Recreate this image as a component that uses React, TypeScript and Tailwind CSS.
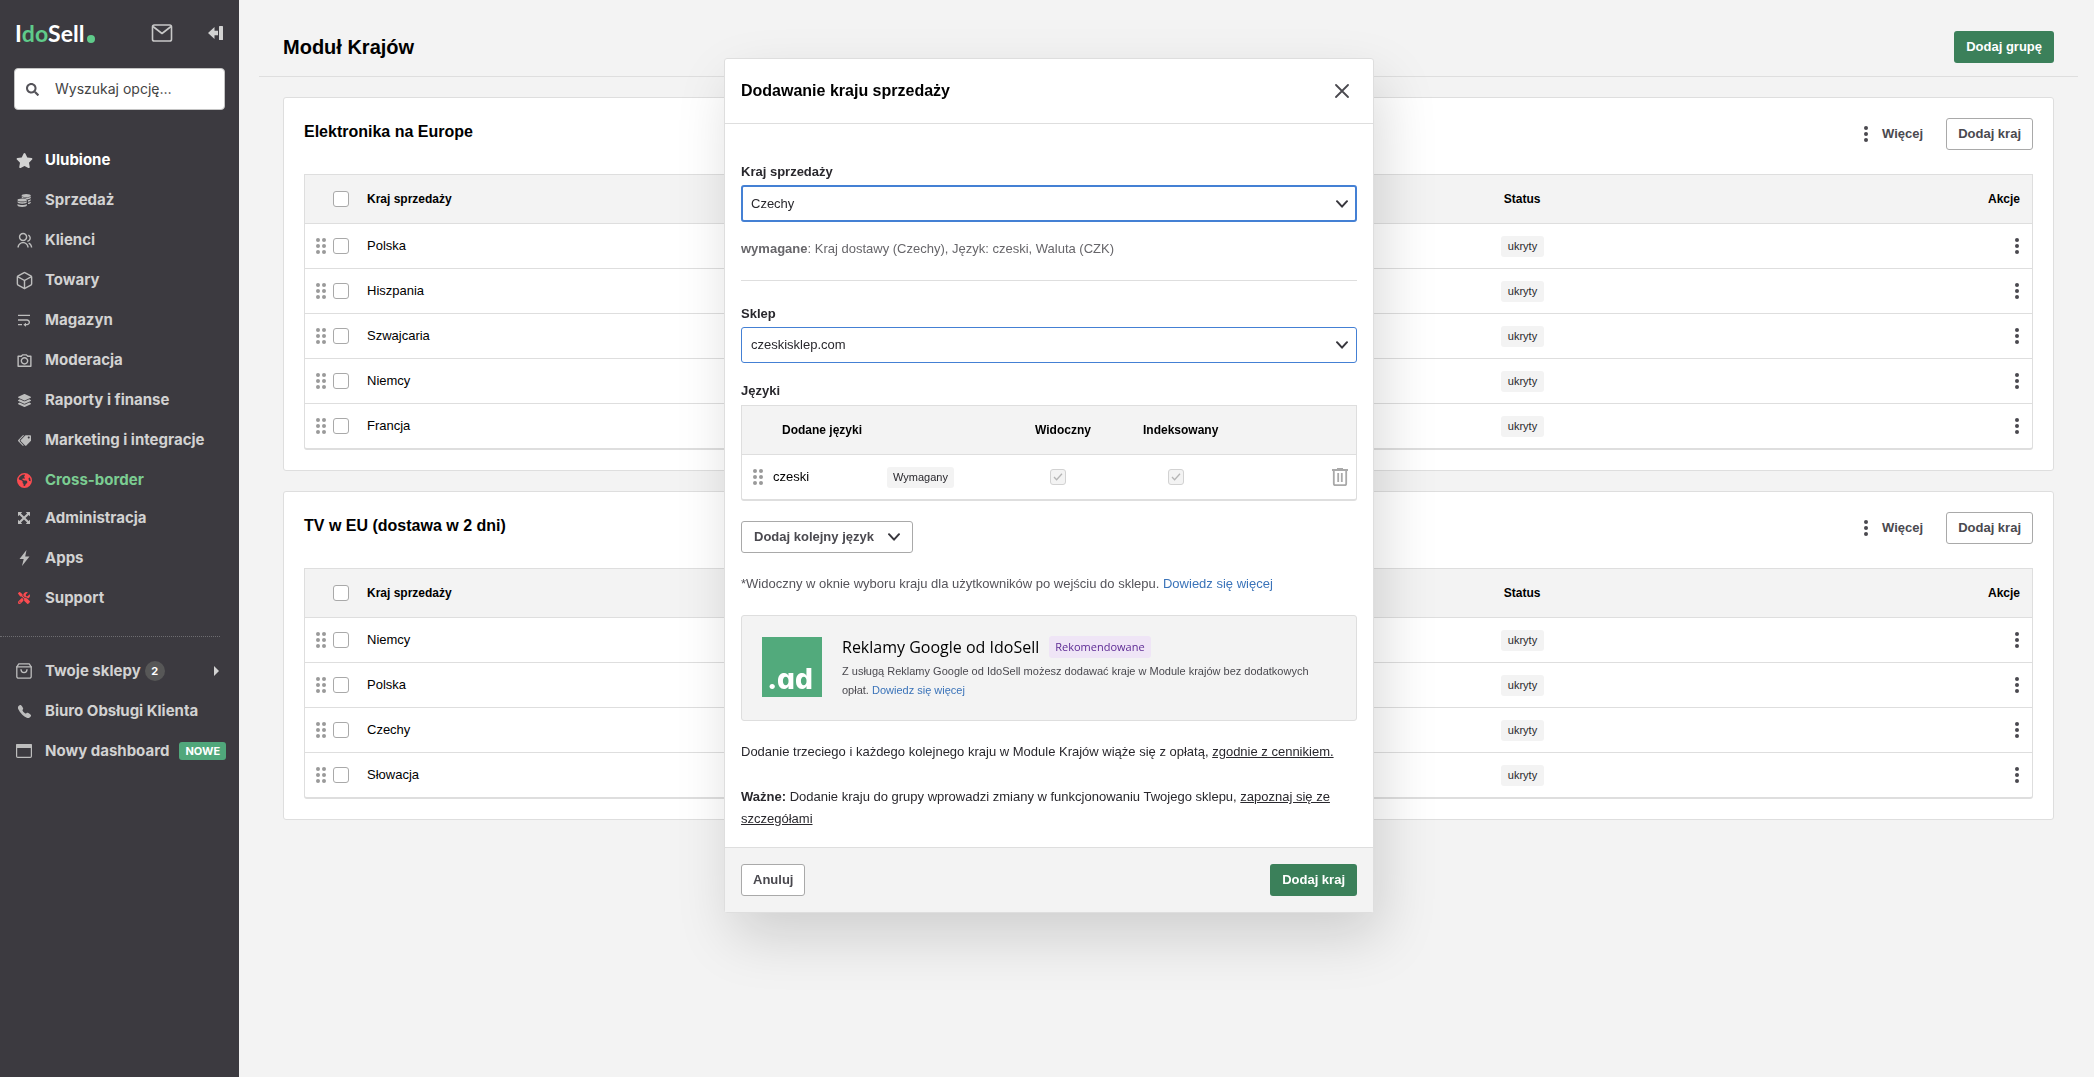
import type { ReactNode } from "react";
import { FaLayerGroup, FaSearch, FaStar, FaTags } from "react-icons/fa";
import { FaEarthAmericas, FaScrewdriverWrench } from "react-icons/fa6";
import { IoCall } from "react-icons/io5";
import { LuBox } from "react-icons/lu";
import { RiCameraLine, RiGroupLine, RiTextWrap } from "react-icons/ri";

function MailIcon() {
  return (
    <svg width="22" height="18" viewBox="0 0 22 18" fill="none" stroke="#c8c8c8" strokeWidth="1.6" strokeLinejoin="round">
      <rect x="1.5" y="1" width="19" height="16" rx="1.8" />
      <path d="M2 2.5 11 9.5 20 2.5" />
    </svg>
  );
}

function CollapseIcon() {
  return (
    <svg width="16" height="14" viewBox="0 0 16 14" fill="#d2d2d2">
      <path d="M0 7 6.5 1v3.8H10v4.4H6.5V13Z" />
      <rect x="11" y="0" width="4" height="14" rx="0.5" />
    </svg>
  );
}

function CoinsIcon() {
  return (
    <svg width="14" height="13" viewBox="0 0 14 13" fill="currentColor">
      <ellipse cx="9.2" cy="1.6" rx="4.6" ry="1.6" />
      <path d="M4.6 2.6c.8.8 2.6 1.2 4.6 1.2s3.8-.4 4.6-1.2v1c0 .9-1.4 1.6-3.4 1.8-.7-.7-2.5-1.1-4.6-1.1-.8-.3-1.2-.7-1.2-1.2Z" />
      <path d="M13.8 5.2v.9c0 .8-1.1 1.4-2.8 1.7V6.2c1.3-.2 2.3-.5 2.8-1ZM13.8 7.7v.7c0 .8-1.1 1.4-2.8 1.7V8.7c1.3-.2 2.3-.5 2.8-1Z" />
      <ellipse cx="5.2" cy="6" rx="4.7" ry="1.5" />
      <path d="M.5 7.3c.9.6 2.7 1 4.7 1s3.800-.4 4.700-1v.8c0 .9-2.100 1.600-4.700 1.600S.5 9 .5 8.100ZM.5 9.900c.9.600 2.700 1 4.700 1s3.800-.4 4.700-1v1.300c0 1-2.100 1.700-4.700 1.700s-4.700-.7-4.700-1.700Z" />
    </svg>
  );
}

function BoltIcon() {
  return (
    <svg width="11" height="16" viewBox="0 0 11 16" fill="currentColor">
      <path d="M7.5 0 .5 9h4.200L3 16l7.500-9.500H6.200Z" />
    </svg>
  );
}

function ArrowsOutIcon() {
  return (
    <svg width="12" height="12" viewBox="0 0 12 12" fill="currentColor">
      <path d="M0 0h4.2L2.9 1.4 6 4.5 9.1 1.4 7.8 0H12v4.2L10.6 2.9 7.5 6l3.1 3.1L12 7.8V12H7.8l1.3-1.4L6 7.5l-3.1 3.1L4.2 12H0V7.8l1.4 1.3L4.5 6 1.4 2.9 0 4.2Z" />
    </svg>
  );
}

function BagIcon() {
  return (
    <svg width="16" height="16" viewBox="0 0 16 16" fill="none" stroke="currentColor" strokeWidth="1.3" strokeLinejoin="round" strokeLinecap="round">
      <path d="M.8 3.8 2.8.8h10.4l2 3v9.6a1.8 1.8 0 0 1-1.8 1.8H2.6a1.8 1.8 0 0 1-1.8-1.8Z" />
      <path d="M.8 3.9h14.4M5 6.6a3 3 0 0 0 6 0" />
    </svg>
  );
}

function WindowIcon() {
  return (
    <svg width="16" height="14" viewBox="0 0 16 14">
      <rect x=".6" y=".6" width="14.8" height="12.8" rx="1.2" fill="none" stroke="currentColor" strokeWidth="1.2" />
      <path d="M0 1.2C0 .5.5 0 1.2 0h13.6c.7 0 1.2.5 1.2 1.2V4H0Z" fill="currentColor" />
    </svg>
  );
}

function DragDots() {
  return (
    <svg width="10" height="16" viewBox="0 0 10 16" fill="#9a9a9a" aria-hidden="true">
      {[2, 8, 14].map((y) => (
        <g key={y}>
          <circle cx="2" cy={y} r="2" />
          <circle cx="8" cy={y} r="2" />
        </g>
      ))}
    </svg>
  );
}

function MenuDots() {
  return (
    <svg width="4" height="16" viewBox="0 0 4 16" fill="#4a494f" aria-hidden="true">
      <circle cx="2" cy="2" r="2" />
      <circle cx="2" cy="8" r="2" />
      <circle cx="2" cy="14" r="2" />
    </svg>
  );
}

function Chevron() {
  return (
    <svg width="12" height="8" viewBox="0 0 12 8" fill="none" stroke="#38373d" strokeWidth="2" strokeLinecap="round" strokeLinejoin="round" aria-hidden="true">
      <path d="M1 1.2 6 6.7 11 1.2" />
    </svg>
  );
}

function TrashIcon() {
  return (
    <svg width="16" height="18" viewBox="0 0 16 18" fill="none" stroke="#a9a9a9" strokeWidth="1.8" aria-hidden="true">
      <path d="M0 2h16M5 .9h6M1.8 2v13.4c0 1 .7 1.7 1.6 1.7h9.2c.9 0 1.6-.7 1.6-1.7V2M6.2 5v9M9.8 5v9" />
    </svg>
  );
}

function NavItem({ icon, label, tone = "normal", children }: { icon: ReactNode; label: string; tone?: "normal" | "bright" | "green"; children?: ReactNode }) {
  const color = tone === "bright" ? "text-white" : tone === "green" ? "text-[#7bcd92]" : "text-[#d2d2d2]";
  return (
    <li>
      <a href="#" className="flex h-10 items-center pr-5 pl-4">
        <span className="flex w-[29px] shrink-0 items-center text-[#bdbdbd]">
          <span className="flex w-4 justify-center [&>svg]:shrink-0">{icon}</span>
        </span>
        <span className={`text-[15px] font-bold whitespace-nowrap ${color}`}>{label}</span>
        {children}
      </a>
    </li>
  );
}

function Sidebar() {
  return (
    <aside className="w-[239px] shrink-0 bg-[#3c3a40] font-['Inter',sans-serif]">
      <div className="flex items-center pt-[17px] pr-[15px] pl-[15px]">
        <a href="#" className="flex items-center font-['Lato',sans-serif] text-[23px] leading-8 font-bold text-white">
          I<span className="text-[#5fcb8a]">do</span>Sell
          <span className="mt-3 ml-[3px] size-2 rounded-full bg-[#5fcb8a]" />
        </a>
        <button type="button" aria-label="Wiadomości" className="ml-auto">
          <MailIcon />
        </button>
        <button type="button" aria-label="Zwiń menu" className="ml-[35px]">
          <CollapseIcon />
        </button>
      </div>
      <label className="mx-3.5 mt-[19px] flex h-[42px] items-center rounded border border-[#c4c4c4] bg-white pl-[11px]">
        <FaSearch className="size-[13px] shrink-0 text-[#55545a]" />
        <input type="text" aria-label="Szukaj" placeholder="Wyszukaj opcję…" className="ml-4 w-full min-w-0 bg-transparent text-sm text-[#444] outline-none placeholder:text-[#444]" />
      </label>
      <nav className="pt-[30px]">
        <ul>
          <NavItem icon={<FaStar className="size-[17px] text-[#d2d2d2]" />} label="Ulubione" tone="bright" />
          <NavItem icon={<CoinsIcon />} label="Sprzedaż" />
          <NavItem icon={<RiGroupLine className="size-[17px]" />} label="Klienci" />
          <NavItem icon={<LuBox className="size-[19px] stroke-[1.8]" />} label="Towary" />
          <NavItem icon={<RiTextWrap className="size-4" />} label="Magazyn" />
          <NavItem icon={<RiCameraLine className="size-[17px]" />} label="Moderacja" />
          <NavItem icon={<FaLayerGroup className="size-[13px]" />} label="Raporty i finanse" />
          <NavItem icon={<FaTags className="size-[13px] -scale-x-100" />} label="Marketing i integracje" />
          <NavItem icon={<FaEarthAmericas className="size-[15px] text-[#fb4b50]" />} label="Cross-border" tone="green" />
        </ul>
        <ul className="-mt-0.5">
          <NavItem icon={<ArrowsOutIcon />} label="Administracja" />
          <NavItem icon={<BoltIcon />} label="Apps" />
          <NavItem icon={<FaScrewdriverWrench className="size-3 text-[#fb4b50]" />} label="Support" />
        </ul>
        <hr className="mt-[18px] mr-[19px] border-t border-dotted border-[#6d6c70]" />
        <ul className="mt-3.5">
          <NavItem icon={<BagIcon />} label="Twoje sklepy">
            <span className="ml-1 flex size-5 items-center justify-center rounded-full bg-[#575757] text-[11px] font-bold text-white">2</span>
            <svg width="5" height="10" viewBox="0 0 5 10" fill="#d2d2d2" className="ml-auto">
              <path d="M0 0 5 5 0 10Z" />
            </svg>
          </NavItem>
          <NavItem icon={<IoCall className="size-[15px]" />} label="Biuro Obsługi Klienta" />
          <NavItem icon={<WindowIcon />} label="Nowy dashboard">
            <span className="ml-2.5 rounded-[3px] bg-[#50a77b] px-1.5 text-[11px] leading-[18px] font-bold text-white">NOWE</span>
          </NavItem>
        </ul>
      </nav>
    </aside>
  );
}

const checkboxClass = "block size-4 appearance-none rounded-[3px] border border-[#a9a9a9] bg-white";
const outlineButton = "flex h-8 items-center rounded-[3px] border border-[#a9a9a9] bg-white text-[13px] font-bold text-[#4a494f]";
const greenButton = "h-8 rounded-[3px] bg-[#3b805a] px-3 text-[13px] font-bold text-white";

function CountryGroup({ title, countries }: { title: string; countries: string[] }) {
  return (
    <section className="rounded-[3px] border border-[#dedede] bg-white p-5">
      <div className="flex items-start">
        <h2 className="text-base leading-7 font-bold">{title}</h2>
        <button type="button" className="ml-auto flex h-8 items-center gap-3.5 text-[13px] font-bold text-[#4a494f]">
          <MenuDots />
          Więcej
        </button>
        <button type="button" className={`${outlineButton} ml-[23px] px-[11px]`}>
          Dodaj kraj
        </button>
      </div>
      <table className="mt-6 w-full table-fixed border-separate border-spacing-0 rounded-b-[3px] border-x border-t border-b-2 border-[#dedede] text-left text-[13px]">
        <thead className="bg-[#f3f3f3] text-xs">
          <tr>
            <th className="h-[49px] w-[50px] border-b border-[#dedede]">
              <input type="checkbox" aria-label="Zaznacz wszystkie" className={`${checkboxClass} ml-7`} />
            </th>
            <th className="w-[66%] border-b border-[#dedede] pl-3">Kraj sprzedaży</th>
            <th className="border-b border-[#dedede] pl-[9px]">Status</th>
            <th className="border-b border-[#dedede] pr-3 text-right">Akcje</th>
          </tr>
        </thead>
        <tbody>
          {countries.map((c, i) => {
            const line = i < countries.length - 1 ? "h-[45px] border-b border-[#dedede]" : "h-11";
            return (
              <tr key={c}>
                <td className={line}>
                  <div className="flex items-center gap-[7px] pl-[11px]">
                    <DragDots />
                    <input type="checkbox" aria-label={c} className={checkboxClass} />
                  </div>
                </td>
                <td className={`pl-3 ${line}`}>{c}</td>
                <td className={`pl-1.5 ${line}`}>
                  <span className="mt-px inline-block rounded-[3px] bg-[#f3f3f3] px-[7px] align-middle text-[11px] leading-[21px] text-[#29282d]">ukryty</span>
                </td>
                <td className={`pr-[13px] ${line}`}>
                  <button type="button" aria-label={`Akcje: ${c}`} className="ml-auto block">
                    <MenuDots />
                  </button>
                </td>
              </tr>
            );
          })}
        </tbody>
      </table>
    </section>
  );
}

function DisabledCheck({ label }: { label: string }) {
  return (
    <span className="relative block size-4">
      <input type="checkbox" checked disabled readOnly aria-label={label} className="block size-4 appearance-none rounded-[3px] border border-[#d2d2d2] bg-[#f3f3f3]" />
      <svg width="10" height="8" viewBox="0 0 10 8" fill="none" stroke="#b5b5b5" strokeWidth="1.3" className="absolute top-1 left-[3px]">
        <path d="M1 4 3.6 6.8 9 .8" />
      </svg>
    </span>
  );
}

function SelectField({ id, label, value, className }: { id: string; label: string; value: string; className: string }) {
  return (
    <div>
      <label htmlFor={id} className="block text-[13px] leading-5 font-bold text-[#29282d]">
        {label}
      </label>
      <div className="relative mt-[3px]">
        <select id={id} defaultValue={value} className={`block w-full appearance-none rounded-[3px] bg-white text-[13px] text-[#29282d] outline-none ${className}`}>
          <option>{value}</option>
        </select>
        <span className="pointer-events-none absolute inset-y-0 right-[9px] flex items-center">
          <Chevron />
        </span>
      </div>
    </div>
  );
}

function Modal() {
  return (
    <div className="fixed inset-0 flex items-start justify-center pt-[58px] pl-1">
      <div role="dialog" aria-labelledby="modal-title" className="w-[650px] rounded-[3px] border border-[#dedede] bg-white text-[#29282d] shadow-[8px_24px_56px_rgba(0,0,0,0.15)]">
        <div className="flex h-[65px] items-center justify-between border-b border-[#dedede] pr-6 pl-4">
          <h2 id="modal-title" className="text-base font-bold text-black">
            Dodawanie kraju sprzedaży
          </h2>
          <button type="button" aria-label="Zamknij">
            <svg width="14" height="14" viewBox="0 0 14 14" fill="none" stroke="#4a494f" strokeWidth="1.8" strokeLinecap="round">
              <path d="M1 1 13 13M13 1 1 13" />
            </svg>
          </button>
        </div>
        <div className="px-4 pt-[38px] pb-[17px]">
          <SelectField id="country" label="Kraj sprzedaży" value="Czechy" className="h-[37px] border-2 border-[#4480d4] pl-2" />
          <p className="mt-[17px] text-[13px] leading-5 text-[#67666a]">
            <strong>wymagane</strong>: Kraj dostawy (Czechy), Język: czeski, Waluta (CZK)
          </p>
          <hr className="mt-[21px] mb-[23px] border-[#dedede]" />
          <SelectField id="shop" label="Sklep" value="czeskisklep.com" className="h-9 border border-[#4480d4] pl-[9px]" />
          <h3 className="mt-[18px] text-[13px] leading-5 font-bold">Języki</h3>
          <table className="mt-1 w-full table-fixed border-separate border-spacing-0 rounded-b-[3px] border-x border-t border-b-2 border-[#dedede] text-left text-[13px] text-black">
            <thead className="bg-[#f3f3f3] text-xs">
              <tr>
                <th className="h-[49px] w-[145px] border-b border-[#dedede] pl-10">Dodane języki</th>
                <th className="w-[136px] border-b border-[#dedede]" />
                <th className="w-[108px] border-b border-[#dedede] pl-3">Widoczny</th>
                <th className="border-b border-[#dedede] pl-3">Indeksowany</th>
                <th className="w-12 border-b border-[#dedede]" />
              </tr>
            </thead>
            <tbody>
              <tr>
                <td className="h-11">
                  <div className="flex items-center gap-2.5 pl-[11px]">
                    <DragDots />
                    czeski
                  </div>
                </td>
                <td>
                  <span className="mt-px inline-block rounded-[3px] bg-[#f3f3f3] px-1.5 align-middle text-[11px] leading-[21px] text-[#29282d]">Wymagany</span>
                </td>
                <td className="pl-[27px]">
                  <DisabledCheck label="Widoczny: czeski" />
                </td>
                <td className="pl-[37px]">
                  <DisabledCheck label="Indeksowany: czeski" />
                </td>
                <td>
                  <button type="button" aria-label="Usuń czeski" className="mr-2 ml-auto block">
                    <TrashIcon />
                  </button>
                </td>
              </tr>
            </tbody>
          </table>
          <button type="button" className={`${outlineButton} mt-5 gap-3.5 px-3`}>
            Dodaj kolejny język
            <Chevron />
          </button>
          <p className="mt-[21px] text-[13px] leading-5 text-[#55545a]">
            *Widoczny w oknie wyboru kraju dla użytkowników po wejściu do sklepu.{" "}
            <a href="#" className="text-[#3a73b9]">
              Dowiedz się więcej
            </a>
          </p>
          <div className="mt-[21px] flex rounded-[3px] border border-[#dedede] bg-[#f3f3f3] p-5">
            <div className="mt-px flex size-[60px] shrink-0 items-end justify-center bg-[#52aa7c] pr-1 font-['Inter',sans-serif] text-[28px] leading-9 font-extrabold text-white [font-feature-settings:'cv11']">
              .ad
            </div>
            <div className="ml-5">
              <div className="flex items-center gap-2.5 font-['Open_Sans',sans-serif]">
                <h3 className="text-base leading-[22px] text-black">Reklamy Google od IdoSell</h3>
                <span className="rounded-[3px] bg-[#efe5f6] px-1.5 text-[11px] leading-[22px] text-[#5d2a94]">Rekomendowane</span>
              </div>
              <p className="mt-1 text-[11px] leading-[19px] text-[#4a494f]">
                Z usługą Reklamy Google od IdoSell możesz dodawać kraje w Module krajów bez dodatkowych opłat.{" "}
                <a href="#" className="text-[#3a73b9]">
                  Dowiedz się więcej
                </a>
              </p>
            </div>
          </div>
          <div className="mt-5 text-[13px] leading-[22px]">
            <p>
              Dodanie trzeciego i każdego kolejnego kraju w Module Krajów wiąże się z opłatą,{" "}
              <a href="#" className="underline">
                zgodnie z cennikiem.
              </a>
            </p>
            <p className="mt-[23px]">
              <strong>Ważne:</strong> Dodanie kraju do grupy wprowadzi zmiany w funkcjonowaniu Twojego sklepu,{" "}
              <a href="#" className="underline">
                zapoznaj się ze szczegółami
              </a>
            </p>
          </div>
        </div>
        <div className="flex justify-between border-t border-[#dedede] bg-[#f3f3f3] px-4 py-4">
          <button type="button" className={`${outlineButton} px-[11px]`}>
            Anuluj
          </button>
          <button type="button" className={greenButton}>
            Dodaj kraj
          </button>
        </div>
      </div>
    </div>
  );
}

export default function App() {
  return (
    <div className="flex min-h-screen bg-[#f3f3f3] font-['Liberation_Sans',Arial,sans-serif] text-black">
      <Sidebar />
      <main className="min-w-0 flex-1 pr-4 pl-5">
        <header className="flex h-[77px] items-center justify-between border-b border-[#dedede] pt-[18px] pr-6 pl-6">
          <h1 className="text-xl font-bold">Moduł Krajów</h1>
          <button type="button" className={greenButton}>
            Dodaj grupę
          </button>
        </header>
        <div className="flex flex-col gap-5 px-6 py-5">
          <CountryGroup title="Elektronika na Europe" countries={["Polska", "Hiszpania", "Szwajcaria", "Niemcy", "Francja"]} />
          <CountryGroup title="TV w EU (dostawa w 2 dni)" countries={["Niemcy", "Polska", "Czechy", "Słowacja"]} />
        </div>
      </main>
      <Modal />
    </div>
  );
}
